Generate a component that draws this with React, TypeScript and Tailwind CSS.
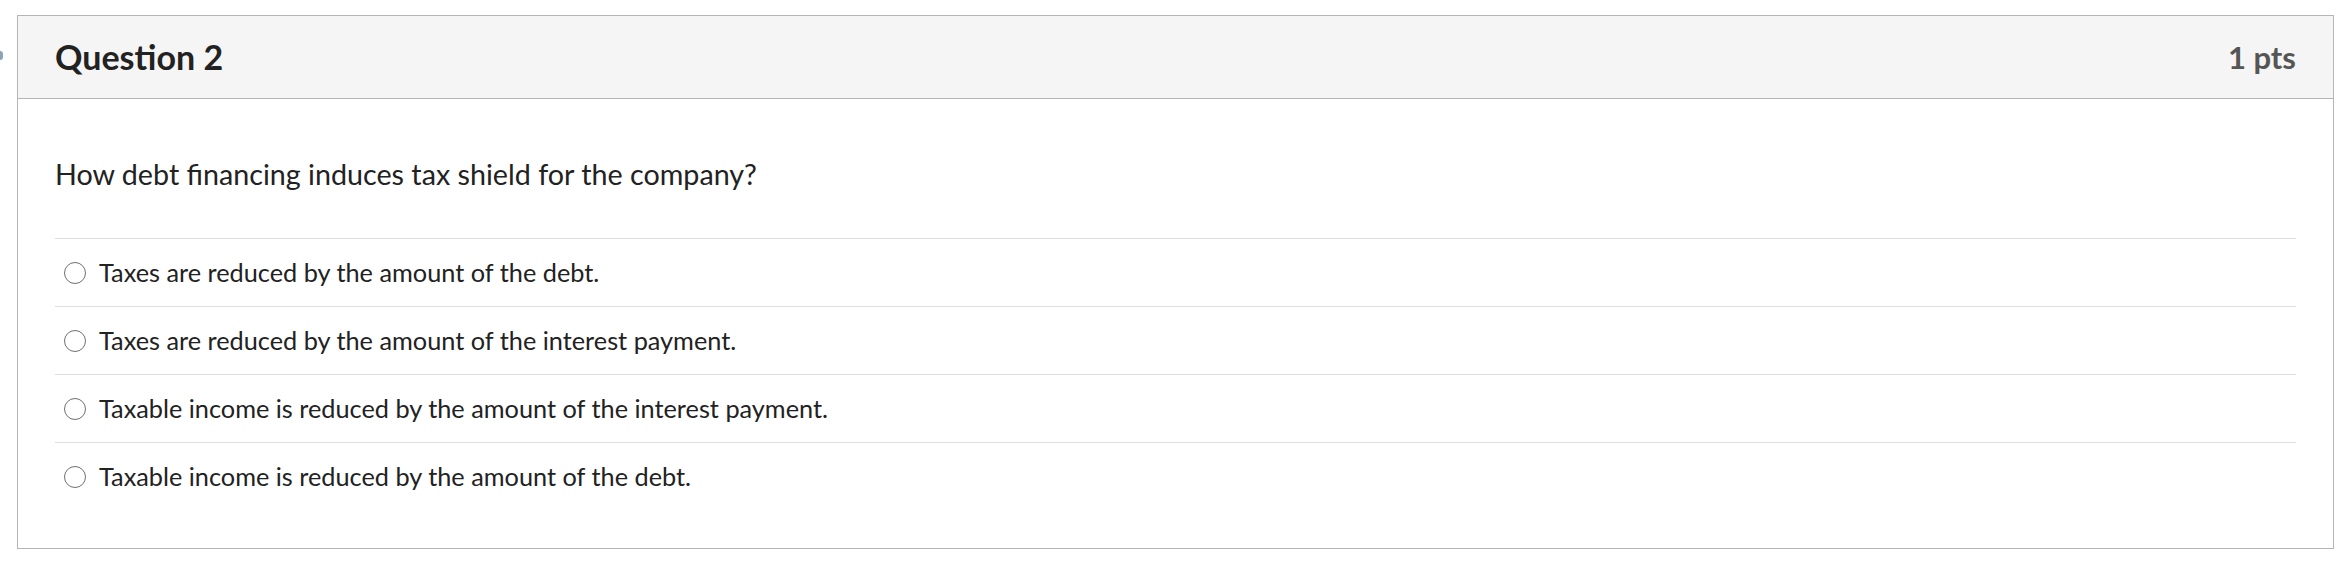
import React from "react";

const answers = [
  "Taxes are reduced by the amount of the debt.",
  "Taxes are reduced by the amount of the interest payment.",
  "Taxable income is reduced by the amount of the interest payment.",
  "Taxable income is reduced by the amount of the debt.",
];

const App: React.FC = () => {
  return (
    <div
      className="flex items-start bg-white w-[2346px] h-[570px] pt-[15px]"
      style={{ fontFamily: "Lato, 'Open Sans', sans-serif" }}
    >
      {/* cut-off marker from the sidebar */}
      <div className="w-[3px] pt-[36px]">
        <div className="w-[3px] h-[9px] rounded-r-full bg-[#8aa4b8]" />
      </div>

      <div className="ml-[14px] w-[2317px] h-[534px] border border-[#b5b5b5] flex flex-col">
        {/* Header */}
        <div className="h-[83px] bg-[#f5f5f5] border-b border-[#b5b5b5] flex items-center justify-between px-[37px]">
          <h2 className="text-[34px] font-bold text-[#222] leading-none">
            Question 2
          </h2>
          <div className="text-[31px] font-bold text-[#555] leading-none">
            1 pts
          </div>
        </div>

        {/* Body */}
        <div className="px-[37px] pt-[56px]">
          <p className="text-[28.7px] leading-[38px] text-[#222]">
            How debt financing induces tax shield for the company?
          </p>

          <div className="mt-[45px]">
            {answers.map((a) => (
              <label
                key={a}
                className="flex items-center h-[68px] border-t border-[#dedede] cursor-pointer"
              >
                <span className="ml-[9px] w-[22px] h-[22px] rounded-full border-[1.5px] border-[#707070] bg-white shrink-0" />
                <span className="ml-[13px] text-[25.3px] text-[#222]">{a}</span>
              </label>
            ))}
          </div>
        </div>
      </div>
    </div>
  );
};

export default App;
